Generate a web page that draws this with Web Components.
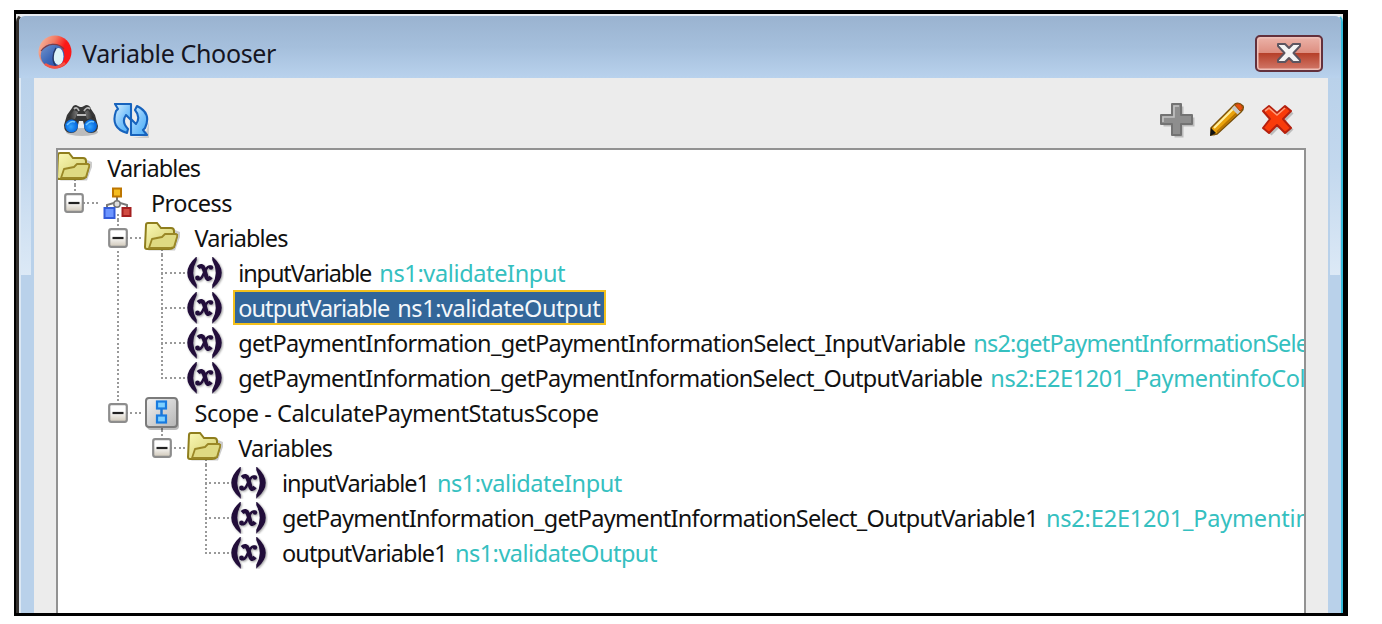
<!DOCTYPE html>
<html lang="en"><head><meta charset="utf-8"><title>Variable Chooser</title>
<style>html,body{margin:0;background:#fff}body{width:1382px;height:624px;overflow:hidden;font-family:"Noto Sans","DejaVu Sans",sans-serif}</style></head>
<body>
<chooser-window heading="Variable Chooser">
<tool-bar slot="tools"></tool-bar>
<variable-tree>
<tree-row cells="" icon="folder" below w="93" label="Variables"></tree-row>
<tree-row cells="E" icon="process" below w="81" label="Process"></tree-row>
<tree-row cells=" e" icon="folder" below w="93" label="Variables"></tree-row>
<tree-row cells=" vt" icon="var" w="133" label="inputVariable" tw="186" type="ns1:validateInput"></tree-row>
<tree-row cells=" vt" icon="var" selected w="151" label="outputVariable" tw="203" type="ns1:validateOutput"></tree-row>
<tree-row cells=" vt" icon="var" w="727" label="getPaymentInformation_getPaymentInformationSelect_InputVariable" tw="335" type="ns2:getPaymentInformationSele"></tree-row>
<tree-row cells=" vl" icon="var" w="744" label="getPaymentInformation_getPaymentInformationSelect_OutputVariable" tw="315" type="ns2:E2E1201_PaymentinfoCol"></tree-row>
<tree-row cells=" E" icon="scope" below w="404" label="Scope - CalculatePaymentStatusScope"></tree-row>
<tree-row cells="  E" icon="folder" below w="94" label="Variables"></tree-row>
<tree-row cells="   t" icon="var" w="147" label="inputVariable1" tw="185" type="ns1:validateInput"></tree-row>
<tree-row cells="   t" icon="var" w="756" label="getPaymentInformation_getPaymentInformationSelect_OutputVariable1" tw="264" type="ns2:E2E1201_Paymentin"></tree-row>
<tree-row cells="   l" icon="var" w="165" label="outputVariable1" tw="202" type="ns1:validateOutput"></tree-row>
</variable-tree>
</chooser-window>
<script>
const ICONS={
app:`<svg width="34" height="35" viewBox="0 0 34 35"><defs><linearGradient id="r" x1="0" y1="0" x2="1" y2=".5"><stop offset="0" stop-color="#f6c4ac"/><stop offset=".45" stop-color="#f27a62"/><stop offset=".75" stop-color="#fb1818"/></linearGradient><linearGradient id="b" x1="0" y1="0" x2="1" y2="1"><stop offset="0" stop-color="#7796cc"/><stop offset=".5" stop-color="#3d68b8"/><stop offset="1" stop-color="#1d48a8"/></linearGradient></defs><circle cx="17" cy="17" r="16.5" fill="url(#r)"/><circle cx="14.5" cy="20.5" r="11.8" fill="url(#b)"/><path d="M3 16C9 8 20 7 26 14" fill="none" stroke="#7b3c48" stroke-width="1.2"/><ellipse cx="20.5" cy="21.5" rx="5" ry="8.5" fill="#dcf3f8"/><path d="M18 13C14 19 14 27 18 31" fill="none" stroke="#253a68" stroke-width="1.4"/><path d="M7 29Q17 36 27 28" fill="none" stroke="#f25748" stroke-width="2.5"/></svg>`,
find:`<svg width="36" height="34" viewBox="0 0 36 34"><defs><linearGradient id="g"><stop offset="0" stop-color="#222"/><stop offset=".5" stop-color="#999"/><stop offset="1" stop-color="#222"/></linearGradient><radialGradient id="l" cx=".45" cy=".55"><stop offset="0" stop-color="#35a5ff"/><stop offset="1" stop-color="#0568df"/></radialGradient></defs><ellipse cx="19" cy="29" rx="16" ry="4" fill="#0003"/><path d="M1 22L4 12L9 5Q10 2 13 2L17 4H19L23 2Q27 2 28 6L32 12L35 23Q35 30 28 30Q21 30 21 22L20 18H16L15 22Q15 30 8 30Q1 30 1 22Z" fill="#363636"/><path d="M5 15L11 7L15 9L12 16Z M31 15L25 7L22 9L24 16Z" fill="url(#g)"/><path d="M11 6Q14 3 16 8M21 8Q24 3 27 6M14 12H23" fill="none" stroke="#bbb" stroke-width="1.8"/><circle cx="8.5" cy="23" r="6.4" fill="url(#l)"/><circle cx="27.5" cy="23" r="6.4" fill="url(#l)"/><path d="M4 22Q8 17 12 19M23 22Q27 17 31 19" fill="none" stroke="#6fc5ff" stroke-width="1.4"/></svg>`,
sync:`<svg width="36" height="36" viewBox="0 0 36 36"><defs><linearGradient id="s" x1="0" y1="0" x2="1" y2="1"><stop offset="0" stop-color="#d9f2ff"/><stop offset=".5" stop-color="#80c5fb"/><stop offset="1" stop-color="#46adf7"/></linearGradient></defs><path d="M19 36H36V20L32 34Z" fill="#0002"/><g fill="url(#s)" stroke="#1763bd" stroke-width="2.1" stroke-linejoin="round"><path d="M2 2H18V18L13 13Q8 20 15 27L14 31Q-3 26 3 9L5 7Z"/><path d="M34 33H18V17L23 22Q28 15 22 8L24 4Q39 11 32 26L30 28Z"/></g></svg>`,
add:`<svg width="36" height="36" viewBox="0 0 36 36"><path d="M14 3H23V14H34V23H23V34H14V23H3V14H14Z" fill="#0003" transform="translate(1.5 1.5)"/><path d="M13 2H22V13H33V22H22V33H13V22H2V13H13Z" fill="#8e8e8e" stroke="#737373" stroke-width="2" stroke-linejoin="round"/><path d="M4 20V15H15V4H20" fill="none" stroke="#c4c4c4" stroke-width="1.6"/></svg>`,
edit:`<svg width="36" height="36" viewBox="0 0 36 36"><path d="M4 35L35 8L34 4L9 28Z" fill="#0003"/><path d="M2 26L26 2Q30 0 34 4Q35 7 32 10L8 32L2 33Z" fill="#e9a20c" stroke="#79500b" stroke-width="1.5"/><path d="M5 26L26 5" stroke="#fff0a0" stroke-width="2.2"/><path d="M8 30L29 10" stroke="#b97500" stroke-width="2"/><path d="M24 5L30 11" stroke="#c7c7c7" stroke-width="4"/><path d="M26 3Q30 0 33 4Q35 7 31 9Z" fill="#e8500c" stroke="#a34810"/><path d="M2 26L7 31L1 34Z" fill="#111"/></svg>`,
del:`<svg width="34" height="34" viewBox="0 0 34 34"><path d="M9 3L17 11L25 3L31 9L23 17L31 25L25 31L17 23L9 31L3 25L11 17L3 9Z" fill="#0003" transform="translate(1.5 1.5)"/><path d="M8 3L16 10L24 3L30 8L22 16L30 25L24 30L16 22L8 30L2 25L9 16L2 8Z" fill="#f93b0a" stroke="#b5200e" stroke-width="2" stroke-linejoin="round"/><path d="M4 8L8 5L16 12L24 5" fill="none" stroke="#ff9b78" stroke-width="1.6"/></svg>`,
folder:`<svg width="36" height="32" viewBox="0 0 36 32"><defs><linearGradient id="f" x1="0" y1="0" x2="1" y2="1"><stop offset="0" stop-color="#fbf9b5"/><stop offset="1" stop-color="#cfc967"/></linearGradient></defs><path d="M4 28.5H31L36 15V10L31 8Z" fill="#0003"/><path d="M2 3Q2 1 4 1H13L17 6H27Q30 6 30 9V12L33 13L30 25Q28 27 25 27H3Q1 27 1 25Z" fill="url(#f)" stroke="#8f7e1d" stroke-width="2"/><path d="M5 26L8 17L18 15L21 12H31Q34 12 33 15L30 25L26 26Z" fill="#dfda82" stroke="#9a8726" stroke-width="1.8" stroke-linejoin="round"/></svg>`,
process:`<svg width="32" height="32" viewBox="0 0 32 32"><path d="M15 8V17M5 22V18L15 15L25 18V22" fill="none" stroke="#777" stroke-width="2"/><circle cx="15" cy="17" r="3.2" fill="#ddd" stroke="#777" stroke-width="1.5"/><rect x="11" y="1.5" width="8" height="8" fill="#f5bd20" stroke="#bd7600" stroke-width="2"/><rect x="2.5" y="21" width="10" height="10" fill="#6c95ff" stroke="#335bd9" stroke-width="2"/><rect x="20.5" y="21" width="8" height="8" fill="#d14c42" stroke="#a42020" stroke-width="2"/></svg>`,
scope:`<svg width="36" height="34" viewBox="0 0 36 34"><defs><linearGradient id="c" x1="0" y1="0" x2="1" y2="1"><stop offset="0" stop-color="#f2f2f2"/><stop offset="1" stop-color="#b5b5b5"/></linearGradient></defs><rect x="3" y="3" width="32" height="31" rx="4" fill="#0004"/><rect x="2" y="2" width="31" height="29" rx="3" fill="url(#c)" stroke="#7b7b7b" stroke-width="2"/><path d="M17.5 12V20" stroke="#1b75d4" stroke-width="2.5"/><rect x="13" y="5.5" width="9" height="7" fill="#7dd0ff" stroke="#187be0" stroke-width="2.2"/><rect x="13" y="19.5" width="9" height="7" fill="#7dd0ff" stroke="#187be0" stroke-width="2.2"/></svg>`,
var:`<svg width="38" height="32" viewBox="0 0 38 32"><defs><filter id="d"><feDropShadow dx="1" dy="1" stdDeviation=".8" flood-opacity=".4"/></filter></defs><g filter="url(#d)" fill="#21103a"><path d="M10 1Q-6 16 10 30L10 28Q3 16 10 3Z" stroke="#21103a" stroke-width="1.5"/><path d="M27 1Q43 16 27 30L27 28Q34 16 27 3Z" stroke="#21103a" stroke-width="1.5"/><path d="M12 10.5Q16 7 18 12L20.5 20Q22 24 25 20" fill="none" stroke="#21103a" stroke-width="4.2"/><path d="M25 10Q22 8 19 14L16 20Q13 24 11 21" fill="none" stroke="#21103a" stroke-width="2.6"/><circle cx="25" cy="10.5" r="2.2"/><circle cx="11.5" cy="21" r="2.4"/></g></svg>`,
minus:`<svg width="20" height="20" viewBox="0 0 20 20"><defs><linearGradient id="m" x1="0" y1="0" x2="0" y2="1"><stop offset=".4" stop-color="#fff"/><stop offset="1" stop-color="#cfc7b8"/></linearGradient></defs><rect x="1.2" y="1.2" width="17.6" height="17.6" rx="2" fill="url(#m)" stroke="#8d8d8d" stroke-width="2.2"/><path d="M4.5 10H15.5" stroke="#222" stroke-width="2.2"/></svg>`,
close:`<svg width="26" height="22" viewBox="0 0 26 22"><path d="M2 2H9L13 6L17 2H24V4L17.5 11L24 18V20H17L13 16L9 20H2V18L8.5 11L2 4Z" fill="#f4f4f4" stroke="#5c5560" stroke-width="2" stroke-linejoin="round"/></svg>`};
class Base extends HTMLElement{render(h){if(!this.shadowRoot)this.attachShadow({mode:'open'});const t=document.createElement('template');t.innerHTML=h;this.shadowRoot.replaceChildren(t.content.cloneNode(true))}}
customElements.define('chooser-window',class extends Base{connectedCallback(){this.render(`<style>
:host{display:block;box-sizing:border-box;width:1334px;height:606px;margin:10px 0 0 14px;background:#000;padding:4px 5px 3px 2px}
.frame{position:relative;box-sizing:border-box;height:599px;display:flex;flex-direction:column;background:#b9d1ea;border-left:3px solid #33302e;border-top:2px solid #e9edf2;border-right:2px solid #35bcdc;border-radius:8px 8px 0 0;padding:0 13px 0 15px;box-shadow:inset 2px 0 #dce8f4}
.corner{background:#e8e8e8;height:599px}
header{height:62px;flex:none;margin:0 -13px 0 -15px;padding:0 17px 0 19px;display:flex;align-items:center;background:linear-gradient(#9ab3d0,#a5bfdc 50%,#b9d2ed);border-radius:6px 6px 0 0}
header>svg{margin-top:10px}
h1{flex:1;margin:12px 0 0 10px;font:400 25px/34px "Noto Sans",sans-serif;color:#151522;white-space:nowrap}
button{box-sizing:border-box;width:68px;height:37px;margin:12px 1px 0 0;padding:0;display:flex;align-items:center;justify-content:center;border:2px solid #63303c;border-radius:5px;background:linear-gradient(#ecb3a9,#dd8e80 48%,#b6402a 50%,#d2796a);box-shadow:inset 0 0 0 1.5px #efc0b8}
main{flex:1;min-height:0;background:#ececec;display:flex;flex-direction:column;padding:0 22px 0 22px}
.glow{position:absolute;top:62px;width:10px;height:197px;background:linear-gradient(#b9d1ea,#c3d8ee 45%,#dce9f6)}
.l{left:2px}.r{right:1px}
</style><div class="corner"><div class="frame"><header>${ICONS.app}<h1><fit-text w="194">${this.getAttribute('heading')}</fit-text></h1><button aria-label="Close">${ICONS.close}</button></header><i class="glow l"></i><i class="glow r"></i><main><slot name="tools"></slot><slot></slot></main></div></div>`)}});
customElements.define('tool-bar',class extends Base{connectedCallback(){this.render(`<style>:host{display:flex;height:70px;flex:none;align-items:center;padding:13px 11px 0 7px;box-sizing:border-box}svg{display:block}.s{flex:1}.a{margin-left:14px}.e{margin-left:14px}.d{margin-left:16px}</style>${ICONS.find}<span class="a">${ICONS.sync}</span><span class="s"></span>${ICONS.add}<span class="e">${ICONS.edit}</span><span class="d">${ICONS.del}</span>`)}});
customElements.define('variable-tree',class extends Base{connectedCallback(){this.render(`<style>:host{display:block;box-sizing:border-box;flex:1;min-height:0;overflow:hidden;background:#fff;border:2px solid #929292;border-bottom:0}</style><slot></slot>`)}});
customElements.define('fit-text',class extends Base{connectedCallback(){this.render(`<style>:host{display:inline-block;white-space:pre}</style><slot></slot>`);const n=this.textContent.length;const w=this.getBoundingClientRect().width;this.style.letterSpacing=((+this.getAttribute('w')-w)/n)+'px'}});
customElements.define('tree-row',class extends Base{connectedCallback(){const g=k=>this.getAttribute(k);
const cells=[...(g('cells')||'')].map(c=>`<span class="c ${c==' '?'':c}">${/e/i.test(c)?ICONS.minus:''}</span>`).join('');
this.render(`<style>:host{display:flex;height:35.02px;align-items:center;margin-left:-5.4px;white-space:nowrap}
.c{position:relative;width:43.67px;height:100%;flex:none;display:flex;align-items:center;justify-content:center}
.c>svg{position:relative;z-index:1;flex:none}
.c::before,.c::after{content:"";position:absolute}
.v::before,.t::before,.l::before,.e::before,.E::before,.below::before{left:21px;width:2px;top:0;bottom:0;background:repeating-linear-gradient(#999 0 2px,transparent 2px 4.377px)}
.l::before,.E::before{bottom:50%}.below::before{top:29px}
.t::after,.l::after,.e::after,.E::after{top:17px;height:2px;left:21px;width:26px;background:repeating-linear-gradient(90deg,#999 0 2px,transparent 2px 4.377px)}
.label{box-sizing:border-box;height:35px;display:flex;align-items:center;gap:8px;margin-left:6px;padding:1px 4px 1px 3px;border:2px solid transparent;font-size:23.5px;line-height:30px;color:#111}
.type{color:#35c0c0}
:host([selected]) .label{background:#336699;border-color:#f3c01c;color:#f4f7fa}:host([selected]) .type{color:inherit}
</style>${cells}<span class="c ${this.hasAttribute('below')?'below':''}">${ICONS[g('icon')]}</span><span class="label"><fit-text w="${g('w')}">${g('label')}</fit-text>${g('type')?`<fit-text class="type" w="${g('tw')}">${g('type')}</fit-text>`:''}</span>`)}});
</script></body></html>
